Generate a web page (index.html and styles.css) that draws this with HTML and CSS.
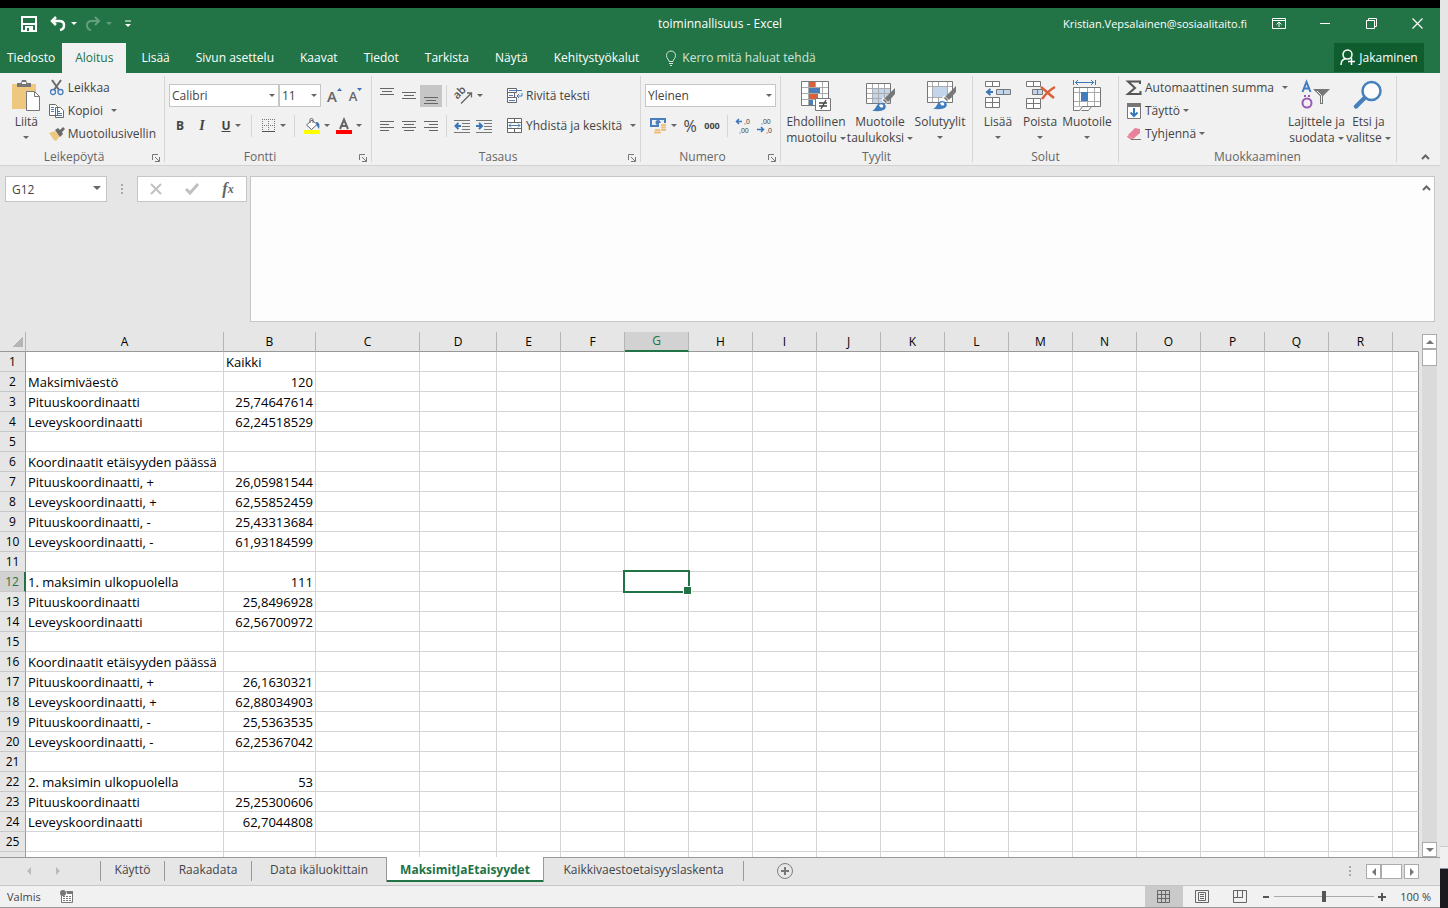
FILE: index.html
```html
<!DOCTYPE html>
<html lang="fi">
  <head>
    <meta charset="UTF-8">
    <title>toiminnallisuus - Excel</title>
    <link rel="stylesheet" href="styles.css">
  </head>

  <body>
    <div class="window">
      <header class="titlebar">
        <div class="quick">
          <button aria-label="Tallenna">
            <svg width="16" height="16" viewBox="0 0 16 16"><path d="M1 1h14v14H1z" fill="none" stroke="#fff" stroke-width="2"/><path d="M2 8h12" stroke="#fff" stroke-width="2"/><path d="M4 10h8v5H4z" fill="#fff"/><path d="M6 12h2v3H6z" fill="#227447"/></svg>
          </button>
          <button aria-label="Kumoa" class="undo">
            <svg width="16" height="16" viewBox="0 0 16 16"><path d="M6 1L2 5l4 4M2 5h7c7 0 6 8 1 9" fill="none" stroke="#fff" stroke-width="2.500"/></svg>
            <i class="arrow"></i>
          </button>
          <button aria-label="Tee uudelleen" class="redo">
            <svg width="16" height="16" viewBox="0 0 16 16"><path d="M10 1l4 4-4 4M14 5H7C0 5 1 13 6 14" fill="none" stroke="#fff" stroke-width="2"/></svg>
            <i class="arrow"></i>
          </button>
          <button aria-label="Mukauta" class="customize">
            <svg width="6" height="8" viewBox="0 0 6 8"><path d="M0 1h6" stroke="#fff"/><path d="M0 4h6L3 7z" fill="#fff"/></svg>
          </button>
        </div>
        <h1 class="title">toiminnallisuus - Excel</h1>
        <div class="account">
          <span class="user">Kristian.Vepsalainen@sosiaalitaito.fi</span>
          <button aria-label="Valintanauhan asetukset"><svg width="14" height="11" viewBox="0 0 14 11" fill="none" stroke="#fff"><path d="M.5.5h13v10H.5zM.5 2.500h13M7 9V4M4.500 6.500L7 4l2.500 2.500"/></svg></button>
          <button aria-label="Pienennä"><svg width="10" height="11" viewBox="0 0 10 11"><path d="M0 5.500h10" stroke="#fff"/></svg></button>
          <button aria-label="Palauta"><svg width="11" height="11" viewBox="0 0 11 11" fill="none" stroke="#fff"><path d="M.5 2.500h8v8h-8zM2.500 2.500v-2h8v8h-2"/></svg></button>
          <button aria-label="Sulje"><svg width="11" height="11" viewBox="0 0 11 11"><path d="M.5.5l10 10M10.500.5l-10 10" stroke="#fff" stroke-width="1.200"/></svg></button>
        </div>
      </header>

      <nav class="tabs">
        <a href="#" class="file">Tiedosto</a>
        <a href="#" class="active">Aloitus</a>
        <a href="#">Lisää</a>
        <a href="#">Sivun asettelu</a>
        <a href="#">Kaavat</a>
        <a href="#">Tiedot</a>
        <a href="#">Tarkista</a>
        <a href="#">Näytä</a>
        <a href="#">Kehitystyökalut</a>
        <a href="#" class="tell">
          <svg width="12" height="16" viewBox="0 0 12 16" fill="none" stroke="#d3e5da"><path d="M4 11.500c0-2-2.500-3-2.500-6a4.500 4.500 0 0 1 9 0c0 3-2.500 4-2.500 6zM4 13.500h4M5 15.500h2"/></svg>
          Kerro mitä haluat tehdä
        </a>
        <button class="share">
          <svg width="16" height="17" viewBox="0 0 16 17" fill="none" stroke="#fff" stroke-width="1.500"><circle cx="7.500" cy="5.500" r="4.500"/><path d="M1 16c0-4 2-6 5-6.500M11.500 9v7M8 12.500h7"/></svg>
          Jakaminen
        </button>
      </nav>

      <section class="ribbon">
        <div class="group clipboard launcher">
          <div class="body">
            <button class="big">
              <svg width="32" height="32" viewBox="0 0 32 32"><path d="M2 4h24v25H2z" fill="#edc87e"/><path d="M7 3h4l1-3h4l1 3h4v4H7z" fill="#777"/><path d="M12 2h4v2h-4z" fill="#f1f1f1"/><path d="M16.500 11.500h8l5 5v14h-13z" fill="#fff" stroke="#777"/><path d="M24.500 11.500v5h5" fill="none" stroke="#777"/></svg>
              <span>Liitä</span><i class="arrow"></i>
            </button>
            <div class="stack">
              <button class="small"><svg width="16" height="16" viewBox="0 0 16 16" fill="none"><path d="M3 0l7 10M12 0L5 10" stroke="#6a6a6a" stroke-width="2"/><circle cx="4" cy="12" r="2.500" stroke="#4a7ebb" stroke-width="1.300"/><circle cx="11.500" cy="12" r="2.500" stroke="#4a7ebb" stroke-width="1.300"/></svg>Leikkaa</button>
              <button class="small"><svg width="16" height="16" viewBox="0 0 16 16" fill="#fff" stroke="#6a6a6a"><path d="M.5 1.500h6l2 2v9h-8zM6.500 4.500h5l3 3v7h-8z"/><path d="M2 4.500h3M2 6.500h3M2 8.500h3M8 8.500h3M8 10.500h5M8 12.500h5" stroke="#4a7ebb"/></svg>Kopioi<i class="arrow far"></i></button>
              <button class="small"><svg width="16" height="16" viewBox="0 0 16 16"><path d="M0 7l6-2 5 5-4 5-2-1z" fill="#edc87e"/><path d="M6 4l3-2 2 2 3-3 2 2-3 3 1 2-3 3z" fill="#6a6a6a"/></svg>Muotoilusivellin</button>
            </div>
          </div>
          <div class="label">Leikepöytä</div>
          <button class="launch" aria-label="Leikepöytä"><svg width="8" height="8" viewBox="0 0 8 8" fill="none" stroke="#777"><path d="M.5 6V.5H6M3 3l4 4M7.500 3v4.500H3"/></svg></button>
        </div>

        <div class="group font launcher">
          <div class="rows">
            <div class="row">
              <label class="combo family"><select aria-label="Fontti"><option>Calibri</option></select></label>
              <label class="combo size"><select aria-label="Fonttikoko"><option>11</option></select></label>
              <button class="tool grow">A<svg width="5" height="3" viewBox="0 0 5 3"><path d="M0 3L2.500 0 5 3z" fill="#3a76b8"/></svg></button>
              <button class="tool shrink">A<svg width="5" height="3" viewBox="0 0 5 3"><path d="M0 0l2.500 3L5 0z" fill="#3a76b8"/></svg></button>
            </div>
            <div class="row">
              <button class="tool bold">B</button>
              <button class="tool italic">I</button>
              <button class="tool split underline"><span>U</span><i class="arrow"></i></button>
              <i class="sep"></i>
              <button class="tool split" aria-label="Reunat"><svg width="14" height="14" viewBox="0 0 14 14" stroke="#777" fill="none"><path d="M0 .5h13M0 6.500h13M.5 0v13M6.500 0v13M12.500 0v13" stroke-dasharray="1 1"/><path d="M0 12.500h13" stroke="#555"/></svg><i class="arrow"></i></button>
              <i class="sep"></i>
              <button class="tool split" aria-label="Täyttöväri"><svg width="16" height="16" viewBox="0 0 16 16"><path d="M2.500 7L8 2l5 4.500-5.500 5z" fill="#fff" stroke="#666"/><path d="M6 5V1.500C6 0 9 0 9 1.500V5" fill="none" stroke="#666"/><path d="M12 4c3 0 4 2 3 7l-2-3z" fill="#3a76b8"/><path d="M0 12h16v4H0z" fill="#ff0"/></svg><i class="arrow"></i></button>
              <button class="tool split" aria-label="Fontin väri"><svg width="16" height="16" viewBox="0 0 16 16"><path d="M4 11L8 1.500 12 11M5.500 8h5" fill="none" stroke="#666" stroke-width="2"/><path d="M0 12h16v4H0z" fill="#f00"/></svg><i class="arrow"></i></button>
            </div>
          </div>
          <div class="label">Fontti</div>
          <button class="launch" aria-label="Fontti"><svg width="8" height="8" viewBox="0 0 8 8" fill="none" stroke="#777"><path d="M.5 6V.5H6M3 3l4 4M7.500 3v4.500H3"/></svg></button>
        </div>

        <div class="group align launcher">
          <div class="body">
            <div class="rows">
              <div class="row">
                <button class="tool" aria-label="Tasaa ylös"><svg width="14" height="16" viewBox="0 0 14 16" stroke="#666"><path d="M0 .5h14M2 3.500h10M0 6.500h14"/></svg></button>
                <button class="tool" aria-label="Tasaa keskelle"><svg width="14" height="16" viewBox="0 0 14 16" stroke="#666"><path d="M0 4.500h14M2 7.500h10M0 10.500h14"/></svg></button>
                <button class="tool on" aria-label="Tasaa alas"><svg width="14" height="16" viewBox="0 0 14 16" stroke="#666"><path d="M0 9.500h14M2 12.500h10M0 15.500h14"/></svg></button>
                <i class="sep"></i>
                <button class="tool split" aria-label="Suunta"><svg width="17" height="16" viewBox="0 0 17 16"><text x="0" y="9" transform="rotate(-45 4 9)" class="ab">ab</text><path d="M5 15.500L15 5.500M11 5h4.500v4.500" fill="none" stroke="#666" stroke-width="1.300"/></svg><i class="arrow"></i></button>
              </div>
              <div class="row">
                <button class="tool" aria-label="Tasaa vasemmalle"><svg width="14" height="12" viewBox="0 0 14 12" stroke="#666"><path d="M0 1.500h14M0 4.500h9M0 7.500h14M0 10.500h9"/></svg></button>
                <button class="tool" aria-label="Keskitä"><svg width="14" height="12" viewBox="0 0 14 12" stroke="#666"><path d="M0 1.500h14M2 4.500h10M0 7.500h14M2 10.500h10"/></svg></button>
                <button class="tool" aria-label="Tasaa oikealle"><svg width="14" height="12" viewBox="0 0 14 12" stroke="#666"><path d="M0 1.500h14M5 4.500h9M0 7.500h14M5 10.500h9"/></svg></button>
                <i class="sep"></i>
                <button class="tool" aria-label="Pienennä sisennystä"><svg width="16" height="14" viewBox="0 0 16 14"><path d="M0 1.500h16M8 4.500h8M8 7.500h8M8 10.500h8M0 13.500h16" stroke="#777"/><path d="M7 7H2M4.500 4L1.500 7l3 3" fill="none" stroke="#3a76b8" stroke-width="2"/></svg></button>
                <button class="tool" aria-label="Suurenna sisennystä"><svg width="16" height="14" viewBox="0 0 16 14"><path d="M0 1.500h16M8 4.500h8M8 7.500h8M8 10.500h8M0 13.500h16" stroke="#777"/><path d="M0 7h5M3 4l3 3-3 3" fill="none" stroke="#3a76b8" stroke-width="2"/></svg></button>
              </div>
            </div>
            <i class="sep tall"></i>
            <div class="rows">
              <div class="row"><button class="small"><svg width="16" height="16" viewBox="0 0 16 16" fill="none" stroke="#666"><path d="M.5.5h9v4h-9zM.5 4.500h7v5h-7zM.5 9.500h9v5h-9z" fill="#fff"/><path d="M2 2.500h13M2 7.500h4M2 12.500h6" stroke="#4a7ebb"/><path d="M15 5v3h-5M12 6l-2 2 2 2" stroke="#4a7ebb"/></svg>Rivitä teksti</button></div>
              <div class="row"><button class="small merge"><svg width="16" height="16" viewBox="0 0 16 16" fill="none" stroke="#666"><path d="M.5.5h14v14H.5zM.5 4.500h14M.5 10.500h14M7.500 0v4M7.500 11v4" fill="#fff"/><path d="M2 7.500h11M4 5.500l-2 2 2 2M11 5.500l2 2-2 2" stroke="#4a7ebb"/></svg>Yhdistä ja keskitä<i class="arrow far"></i></button></div>
            </div>
          </div>
          <div class="label">Tasaus</div>
          <button class="launch" aria-label="Tasaus"><svg width="8" height="8" viewBox="0 0 8 8" fill="none" stroke="#777"><path d="M.5 6V.5H6M3 3l4 4M7.500 3v4.500H3"/></svg></button>
        </div>

        <div class="group number launcher">
          <div class="rows">
            <div class="row"><label class="combo format"><select aria-label="Lukumuoto"><option>Yleinen</option></select></label></div>
            <div class="row">
              <button class="tool split" aria-label="Valuutta"><svg width="17" height="16" viewBox="0 0 17 16"><path d="M0 0h16v9H0z" fill="#4a7ebb"/><path d="M2 2h12v5H2z" fill="#e8f0f8"/><circle cx="8" cy="4.500" r="2.500" fill="#4a7ebb"/><path d="M9 9V5h8v9h-5v2H4v-5h5z" fill="#f1f1f1"/><path d="M11 6h5v2h-5zM11 8.500h5v2h-5zM11 11h5v2h-5zM5 11h5v2H5zM4 13.500h7v2H4z" fill="#edc07e"/></svg><i class="arrow"></i></button>
              <button class="tool percent">%</button>
              <button class="tool thousands">000</button>
              <i class="sep"></i>
              <button class="tool" aria-label="Lisää desimaaleja"><svg width="16" height="16" viewBox="0 0 16 16"><text x="9" y="6" class="dec">,0</text><text x="4" y="15" class="dec">,00</text><path d="M7 3.500H2M4 1L1.500 3.500 4 6" fill="none" stroke="#3a76b8" stroke-width="1.500"/></svg></button>
              <button class="tool" aria-label="Vähennä desimaaleja"><svg width="16" height="16" viewBox="0 0 16 16"><text x="4" y="6" class="dec">,00</text><text x="9" y="15" class="dec">,0</text><path d="M0 11.500h6M4 9l2.500 2.500L4 14" fill="none" stroke="#3a76b8" stroke-width="1.500"/></svg></button>
            </div>
          </div>
          <div class="label">Numero</div>
          <button class="launch" aria-label="Numero"><svg width="8" height="8" viewBox="0 0 8 8" fill="none" stroke="#777"><path d="M.5 6V.5H6M3 3l4 4M7.500 3v4.500H3"/></svg></button>
        </div>

        <div class="group styles">
          <div class="body">
            <button class="big">
              <svg width="32" height="32" viewBox="0 0 32 32"><path d="M1.500 1.500h27v24h-27z" fill="#fff" stroke="#777"/><path d="M2 7.500h26M2 13.500h26M2 19.500h26M8.500 2v23M15.500 2v23M22.500 2v23" stroke="#aaa"/><path d="M9 2h6v5H9zM9 14h9v5H9z" fill="#d9603b"/><path d="M9 8h11v5H9zM9 20h4v5H9z" fill="#4a7ebb"/><path d="M15.500 18.500h15v12h-15z" fill="#fff" stroke="#777"/><path d="M19 23h8M19 26h8M26 20l-5 9" stroke="#444" stroke-width="1.300"/></svg>
              <span>Ehdollinen</span><span>muotoilu<i class="arrow"></i></span>
            </button>
            <button class="big">
              <svg width="32" height="32" viewBox="0 0 32 32"><path d="M2.500 3.500h24v20h-24z" fill="#fff" stroke="#777"/><path d="M9 9h17v14H9z" fill="#c3d5ea"/><path d="M3 8.500h23M3 13.500h23M3 18.500h23M8.500 4v19M14.500 4v19M20.500 4v19" stroke="#aaa"/><path d="M31 8v6l-7 8-4-3z" fill="#777"/><path d="M19 17l5 5-2 2-5-4z" fill="#f1f1f1"/><path d="M20 19l3 3-1 1-3-3z" fill="#666"/><path d="M8 31c4-1 4-8 9-8 4 0 6 3 4 6-3 3-9 2-13 2z" fill="#3f7dbd"/><path d="M15 25c3-2 5 0 4 2-1 1-3 1-4-2z" fill="#fff"/></svg>
              <span>Muotoile</span><span>taulukoksi<i class="arrow"></i></span>
            </button>
            <button class="big narrow">
              <svg width="32" height="32" viewBox="0 0 32 32"><path d="M3.500 1.500h25v21h-25z" fill="#fff" stroke="#777"/><path d="M4 6.500h24M4 17.500h24M8.500 2v20M23.500 2v20M14.500 2v4M14.500 18v4" stroke="#aaa"/><path d="M9 7h14v10H9z" fill="#c3d5ea"/><path d="M32 6v6l-7 8-4-3z" fill="#777"/><path d="M20 15l5 5-2 2-5-4z" fill="#f1f1f1"/><path d="M21 17l3 3-1 1-3-3z" fill="#666"/><path d="M9 29c4-1 4-8 9-8 4 0 6 3 4 6-3 3-9 2-13 2z" fill="#3f7dbd"/><path d="M16 23c3-2 5 0 4 2-1 1-3 1-4-2z" fill="#fff"/></svg>
              <span>Solutyylit</span><i class="arrow"></i>
            </button>
          </div>
          <div class="label">Tyylit</div>
        </div>

        <div class="group cells">
          <div class="body">
            <button class="big">
              <svg width="28" height="32" viewBox="0 0 28 32"><path d="M1.500 1.500h14v5h-14zM8.500 1.500v5M1.500 17.500h14v10h-14zM1.500 22.500h14M8.500 17.500v10" fill="#fff" stroke="#777"/><path d="M12.500 9.500h14v5h-14zM19.500 9.500v5" fill="#c3d5ea" stroke="#777"/><path d="M9 12H4M6.500 9L3 12l3.500 3" fill="none" stroke="#3a76b8" stroke-width="2"/></svg>
              <span>Lisää</span><i class="arrow"></i>
            </button>
            <button class="big">
              <svg width="30" height="32" viewBox="0 0 30 32"><path d="M1.500 1.500h14v5h-14zM8.500 1.500v5M1.500 18.500h14v10h-14zM1.500 23.500h14M8.500 18.500v10" fill="#fff" stroke="#777"/><path d="M7.500 9.500h10v5h-10zM12.500 9.500v5" fill="#c3d5ea" stroke="#777"/><path d="M16 7c5 4 9 8 13 11M30 7c-6 3-10 8-13 12" fill="none" stroke="#d9603b" stroke-width="2.500"/></svg>
              <span>Poista</span><i class="arrow"></i>
            </button>
            <button class="big">
              <svg width="32" height="32" viewBox="0 0 32 32"><path d="M2.500 0v5M24.500 0v5M4 2.500h19M7 0L4.500 2.500 7 5M20 0l2.500 2.500L20 5" fill="none" stroke="#3a76b8"/><path d="M2.500 7.500h27v19h-27z" fill="#fff" stroke="#777"/><path d="M3 12.500h26M3 21.500h26M8.500 8v18M16.500 8v18M23.500 8v18" stroke="#aaa"/><path d="M10 12h7v9h-7z" fill="#3f7dbd"/><path d="M2.500 26.500v4h6l3-4M10.500 30.500h7l3-4" fill="#fff" stroke="#777"/></svg>
              <span>Muotoile</span><i class="arrow"></i>
            </button>
          </div>
          <div class="label">Solut</div>
        </div>

        <div class="group edit">
          <div class="body">
            <div class="stack">
              <button class="small"><svg width="16" height="16" viewBox="0 0 16 16"><path d="M14 4V1.500H2L9 8l-7 6h12.500V11" fill="none" stroke="#555" stroke-width="2"/></svg>Automaattinen summa<i class="arrow far"></i></button>
              <button class="small"><svg width="16" height="16" viewBox="0 0 16 16"><path d="M1.500.5h13v15h-13z" fill="#fff" stroke="#777"/><path d="M1 0h14v4H1z" fill="#777"/><path d="M8 5v8M4.500 9.500L8 13l3.500-3.500" fill="none" stroke="#3a76b8" stroke-width="2"/></svg>Täyttö<i class="arrow near"></i></button>
              <button class="small"><svg width="16" height="16" viewBox="0 0 16 16"><path d="M9 2l5 1v4l-7 6-5-4z" fill="#e8829a"/><path d="M1.500 10L6 13.500" stroke="#e8829a" stroke-width="2"/><path d="M5 13.500h10" stroke="#777"/></svg>Tyhjennä<i class="arrow near"></i></button>
            </div>
            <button class="big sort">
              <svg width="32" height="32" viewBox="0 0 32 32"><path d="M2.500 12L6.500 2l4 10M4 8.500h5" fill="none" stroke="#3f7dbd" stroke-width="2"/><circle cx="7" cy="23" r="4.500" fill="none" stroke="#9b59b6" stroke-width="2"/><path d="M4 15h2v2H4zM8 15h2v2H8z" fill="#9b59b6"/><path d="M13 9h17l-7 7v8h-3v-8z" fill="#777"/><path d="M17 11l4.500 4.500V23" fill="none" stroke="#f1f1f1"/></svg>
              <span>Lajittele ja</span><span>suodata<i class="arrow"></i></span>
            </button>
            <button class="big find">
              <svg width="30" height="32" viewBox="0 0 30 32"><circle cx="18.500" cy="11" r="9" fill="#fcfcfc" stroke="#4680bd" stroke-width="2.500"/><path d="M11.500 18L3 26.500" stroke="#4680bd" stroke-width="4.500" stroke-linecap="round"/></svg>
              <span>Etsi ja</span><span>valitse<i class="arrow"></i></span>
            </button>
          </div>
          <div class="label">Muokkaaminen</div>
        </div>
        <button class="collapse" aria-label="Tiivistä valintanauha"><svg width="9" height="6" viewBox="0 0 9 6"><path d="M1 5l3.500-3.500L8 5" fill="none" stroke="#666" stroke-width="2"/></svg></button>
      </section>

      <section class="formula">
        <label class="namebox"><input type="text" value="G12" aria-label="Nimiruutu"></label>
        <i class="dots"></i>
        <div class="fx">
          <button aria-label="Peruuta"><svg width="12" height="12" viewBox="0 0 12 12"><path d="M1 1l10 10M11 1L1 11" stroke="#c0c0c0" stroke-width="2"/></svg></button>
          <button aria-label="Hyväksy"><svg width="14" height="12" viewBox="0 0 14 12"><path d="M1 6l4 4 8-9" fill="none" stroke="#c0c0c0" stroke-width="3"/></svg></button>
          <button class="insert">f<sub>x</sub></button>
        </div>
        <div class="input">
          <textarea aria-label="Kaavarivi"></textarea>
          <svg width="9" height="6" viewBox="0 0 9 6"><path d="M1 5l3.500-3.500L8 5" fill="none" stroke="#666" stroke-width="2"/></svg>
        </div>
      </section>

      <main class="grid">
        <div class="view">
          <table id="sheet"></table>
        </div>
        <div class="vscroll">
          <button aria-label="Ylös"><i class="tri up"></i></button>
          <div class="thumb"></div>
          <button class="end" aria-label="Alas"><i class="tri down"></i></button>
        </div>
      </main>

      <nav class="sheets">
        <div class="move"><i class="tri left"></i><i class="tri right"></i></div>
        <a href="#">Käyttö</a>
        <a href="#" class="w2">Raakadata</a>
        <a href="#" class="w3">Data ikäluokittain</a>
        <a href="#" class="active">MaksimitJaEtaisyydet</a>
        <a href="#" class="w5">Kaikkivaestoetaisyyslaskenta</a>
        <button class="add" aria-label="Uusi taulukko"><svg width="16" height="16" viewBox="0 0 16 16"><circle cx="8" cy="8" r="7.500" fill="none" stroke="#808080"/><path d="M4 8h8M8 4v8" stroke="#777" stroke-width="2"/></svg></button>
        <i class="dots"></i>
        <div class="hscroll">
          <button aria-label="Vasemmalle"><i class="tri left"></i></button>
          <div class="thumb"></div>
          <button class="end" aria-label="Oikealle"><i class="tri right"></i></button>
        </div>
      </nav>

      <footer class="status">
        <span class="ready">Valmis</span>
        <svg class="macro" width="14" height="14" viewBox="0 0 14 14"><path d="M1.500 4v8.500h11V2H6" fill="#fff" stroke="#777"/><path d="M7 1h6v3H7z" fill="#777"/><circle cx="3" cy="3" r="3" fill="#777"/><path d="M3 6.500h9M3 8.500h9M3 10.500h9" stroke="#777" stroke-dasharray="2 1"/></svg>
        <div class="views">
          <button class="on" aria-label="Normaali"><svg width="14" height="14" viewBox="0 0 14 14" fill="none" stroke="#666"><path d="M.5.5h12v12H.5zM0 4.500h13M0 8.500h13M4.500 0v13M8.500 0v13"/></svg></button>
          <button aria-label="Sivun asettelu"><svg width="14" height="14" viewBox="0 0 14 14" fill="none" stroke="#666"><path d="M.5.5h13v12H.5zM3.500 2.500h7v8h-7zM5 4.500h4M5 6.500h4M5 8.500h4"/></svg></button>
          <button aria-label="Sivunvaihdot"><svg width="14" height="14" viewBox="0 0 14 14" fill="none" stroke="#666"><path d="M.5.5h13v12H.5zM4.500 1v6M9.500 1v6M1 7.500h9"/></svg></button>
        </div>
        <button class="zoom" aria-label="Loitonna"><svg width="8" height="8" viewBox="0 0 8 8"><path d="M1 4h6" stroke="#555" stroke-width="2"/></svg></button>
        <input type="range" min="10" max="190" value="100" aria-label="Zoomaus">
        <button class="zoom" aria-label="Lähennä"><svg width="8" height="8" viewBox="0 0 8 8"><path d="M0 4h8M4 0v8" stroke="#555" stroke-width="2"/></svg></button>
        <span class="level">100 %</span>
      </footer>
    </div>
    <div class="edge"></div>

    <script src="script.js"></script>
  </body>
</html>
```
FILE: styles.css
```css
* {
  box-sizing: border-box;
}
html, body {
  margin: 0;
  height: 100%;
}
body {
  display: flex;
  overflow: hidden;
  font-family: 'Open Sans', 'Noto Sans', sans-serif;
  font-size: 12px;
  color: #444;
  background: #e6e6e6;
}
button, input, select, textarea {
  font: inherit;
  color: inherit;
  margin: 0;
  padding: 0;
  border: 0;
  background: none;
  outline: none;
}
a {
  color: inherit;
  text-decoration: none;
}
svg {
  display: block;
  flex: none;
  overflow: visible;
}
button {
  display: flex;
  align-items: center;
  justify-content: center;
  white-space: nowrap;
}

.window {
  flex: 1;
  min-width: 0;
  height: 100%;
  display: flex;
  flex-direction: column;
  border-top: 8px solid #000;
}
.edge {
  width: 8px;
  background: linear-gradient(to top, #1c1a1e 39px, #8a93a5 39px, #8a93a5 40px, #f0f0f0 40px, #f0f0f0 61px, #ccc 61px, #ccc 62px, #e6e6e6 62px);
}

.arrow {
  display: inline-block;
  border: 3px solid transparent;
  border-top-color: #666;
  border-bottom: 0;
}

/* title bar */
.titlebar {
  display: flex;
  align-items: center;
  height: 35px;
  padding-bottom: 4px;
  background: #227447;
  color: #fff;
}
.quick {
  display: flex;
  flex: 1;
  gap: 13px;
}
.quick button:first-child {
  margin-left: 21px;
}
.quick .arrow {
  border-top-color: #fff;
  margin-left: 5px;
}
.quick .redo {
  opacity: 0.3;
  margin-left: -5px;
}
.title {
  margin: 0;
  font-size: 12px;
  font-weight: normal;
}
.account {
  display: flex;
  align-items: center;
  justify-content: flex-end;
  flex: 1;
}
.account button {
  width: 46px;
  height: 30px;
}
.user {
  margin-right: 9px;
  font-size: 11px;
}

/* tabs */
.tabs {
  display: flex;
  align-items: stretch;
  height: 30px;
  background: #227447;
  color: #fff;
}
.tabs a {
  padding: 0 13px;
  line-height: 30px;
  white-space: nowrap;
}
.tabs .file {
  padding: 0 7px;
}
.tabs .active {
  margin-right: 2px;
  background: #f1f1f1;
  color: #217346;
}
.tabs .tell {
  display: flex;
  align-items: center;
  gap: 5px;
  color: #d3e5da;
}
.share {
  gap: 3px;
  width: 90px;
  height: 29px;
  margin-left: auto;
  margin-right: 16px;
  background: #0f5c2f;
  color: #fff;
}

/* ribbon */
.ribbon {
  display: flex;
  height: 93px;
  padding-top: 3px;
  background: #f1f1f1;
  border-bottom: 1px solid #d2d2d2;
}
.group {
  position: relative;
  display: flex;
  flex-direction: column;
  justify-content: space-between;
  margin-bottom: 3px;
  padding: 0 4px;
  border-right: 1px solid #d5d5d5;
}
.body {
  display: flex;
}
.label {
  height: 10px;
  line-height: 10px;
  text-align: center;
  color: #666;
}
.launcher .label {
  padding-right: 16px;
}
.launch {
  position: absolute;
  right: 4px;
  bottom: 0;
}
.clipboard { width: 165px; }
.font { width: 207px; }
.align { width: 269px; }
.number { width: 140px; }
.styles { width: 192px; padding: 0 3px; }
.cells { width: 146px; }
.edit { width: 278px; }

.big {
  flex-direction: column;
  justify-content: flex-start;
  width: 64px;
  height: 70px;
  padding-top: 4px;
  line-height: 16px;
}
.big svg {
  margin-bottom: 2px;
}
.big > .arrow {
  margin-top: 6px;
}
.big span .arrow {
  margin: 0 0 2px 3px;
}
.big.narrow { width: 56px; }
.clipboard .big { width: 45px; }
.cells .big { width: 42px; }
.cells .big:last-child { width: 52px; }
.big.sort { width: 57px; }
.big.find { width: 48px; }

.small {
  height: 23px;
  padding: 0 4px;
  gap: 3px;
}
.stack .small {
  padding-left: 0;
}
.far {
  margin-left: 5px;
}
.stack {
  display: flex;
  flex-direction: column;
  align-items: flex-start;
}
.edit .stack {
  width: 165px;
  padding-left: 3px;
}
.rows {
  padding-top: 8px;
}
.row {
  display: flex;
  align-items: center;
  height: 23px;
  margin-bottom: 7px;
}
.combo {
  position: relative;
  height: 23px;
}
.combo select {
  appearance: none;
  width: 100%;
  height: 100%;
  padding-left: 2px;
  border: 1px solid #c6c6c6;
  background: #fff;
}
.combo::after, .namebox::after {
  content: '';
  position: absolute;
  right: 4px;
  top: 10px;
  border: 3px solid transparent;
  border-top-color: #666;
  border-bottom: 0;
}
.family { width: 111px; }
.size { width: 43px; }
.format { width: 131px; }

.tool {
  width: 22px;
  height: 22px;
}
.tool.on {
  background: #c6c6c6;
}
.split {
  width: 32px;
}
.split svg, .split span {
  margin: 0 4px;
}
.grow, .shrink {
  align-items: flex-start;
  width: 23px;
  font-size: 15px;
  font-weight: 600;
  line-height: 22px;
  color: #666;
}
.grow {
  padding-left: 3px;
}
.shrink {
  font-size: 13px;
}
.grow svg, .shrink svg {
  margin-top: 3px;
}
.bold, .underline {
  font-weight: bold;
}
.italic {
  font: italic bold 14px 'Liberation Serif', serif;
}
.underline span {
  text-decoration: underline;
}
.sep {
  width: 1px;
  height: 22px;
  margin: 0 4px;
  background: #d5d5d5;
}
.font .sep {
  margin: 0 4px 0 6px;
}
.sep.tall {
  height: 54px;
  margin-top: 8px;
}
.tool.percent {
  margin-left: 2px;
  font-size: 16px;
}
.thousands {
  font-size: 9px;
  font-weight: bold;
}
.ab {
  font-size: 11px;
  font-weight: 600;
  fill: #555;
}
.dec {
  font: 7px 'Liberation Sans', sans-serif;
  fill: #444;
}
.collapse {
  margin: auto 10px 5px auto;
}

/* formula bar */
.formula {
  display: flex;
  height: 166px;
  padding: 10px 5px;
  background: #e6e6e6;
}
.namebox {
  position: relative;
  width: 102px;
  height: 26px;
}
.namebox input {
  width: 100%;
  height: 100%;
  padding-left: 6px;
  border: 1px solid #c6c6c6;
  background: #fff;
}
.namebox::after {
  right: 6px;
  border-width: 4px 4px 0;
}
.dots {
  width: 2px;
  height: 10px;
  margin: 8px 14px;
  background: repeating-linear-gradient(#aaa 0 2px, transparent 2px 4px);
}
.fx {
  display: flex;
  width: 110px;
  height: 26px;
  margin-right: 3px;
  border: 1px solid #c6c6c6;
  background: #fff;
}
.fx button {
  flex: 1;
}
.fx .insert {
  font: italic bold 16px 'Liberation Serif', serif;
  color: #666;
}
.insert sub {
  font-size: 12px;
}
.input {
  position: relative;
  flex: 1;
}
.input textarea {
  display: block;
  width: 100%;
  height: 100%;
  resize: none;
  border: 1px solid #c6c6c6;
  background: #fdfdfd;
}
.input svg {
  position: absolute;
  right: 4px;
  top: 9px;
}

/* grid */
.grid {
  display: flex;
  flex: 1;
  min-height: 0;
  background: #e6e6e6;
}
.view {
  flex: 1;
  overflow: hidden;
}
#sheet {
  width: 100%;
  table-layout: fixed;
  border-collapse: separate;
  border-spacing: 0;
  font-size: 13px;
  line-height: 18px;
  color: #000;
}
#sheet th, #sheet td {
  height: 20px;
  padding: 1px 2px 0;
  border-right: 1px solid #d4d4d4;
  border-bottom: 1px solid #d4d4d4;
  white-space: nowrap;
}
#sheet th {
  font-size: 12px;
  font-weight: normal;
  background: #e6e6e6;
}
#sheet td {
  background: #fff;
}
#sheet thead th {
  padding-top: 0;
  border-right-color: #b5b5b5;
  border-bottom-color: #999;
}
#sheet thead th:last-child {
  border-right-color: #e6e6e6;
}
#sheet tbody th {
  border-right-color: #999;
  border-bottom-color: #c8c8c8;
}
#sheet td:last-child {
  border-right-color: #999;
}
#sheet th.current {
  background: #d2d2d2;
  color: #217346;
}
#sheet thead th.current {
  border-bottom: 2px solid #217346;
}
#sheet tbody th.current {
  border-right: 2px solid #217346;
}
#sheet .num {
  text-align: right;
}
#sheet .cursor {
  position: relative;
}
.cursor::before {
  content: '';
  position: absolute;
  inset: -2px;
  border: 2px solid #217346;
}
.cursor::after {
  content: '';
  position: absolute;
  right: -4px;
  bottom: -4px;
  width: 7px;
  height: 7px;
  border: 1px solid #fff;
  background: #217346;
}
.corner::after {
  content: '';
  display: block;
  margin-left: auto;
  width: 11px;
  height: 11px;
  background: linear-gradient(135deg, transparent 50%, #b5b5b5 50%);
}

.tri {
  border: 4px solid transparent;
}
.up { border-bottom-color: #777; border-top: 0; }
.down { border-top-color: #777; border-bottom: 0; }
.left { border-right-color: #777; border-left: 0; }
.right { border-left-color: #777; border-right: 0; }

.vscroll {
  display: flex;
  flex-direction: column;
  width: 15px;
  margin: 2px 3px 0;
  background: #dadada;
}
.vscroll button, .hscroll button {
  width: 15px;
  height: 15px;
  border: 1px solid #ababab;
  background: #fff;
}
.thumb {
  height: 17px;
  border: 1px solid #ababab;
  background: #fff;
}
.vscroll .end {
  margin-top: auto;
}

/* sheet tabs */
.sheets {
  display: flex;
  height: 29px;
  border-top: 1px solid #999;
  border-bottom: 1px solid #c6c6c6;
  background: #e6e6e6;
}
.sheets a {
  width: 64px;
  height: 20px;
  margin-top: 3px;
  line-height: 18px;
  text-align: center;
  white-space: nowrap;
  border-right: 1px solid #999;
}
.sheets .w2 { width: 87px; }
.sheets .w3 { width: 134px; border-right: 0; }
.sheets .w5 { width: 200px; }
.sheets .active {
  width: 158px;
  height: 25px;
  margin-top: -1px;
  padding-top: 4px;
  border: solid #999;
  border-width: 0 1px;
  box-shadow: inset 0 -2px #217346;
  background: #fff;
  color: #217346;
  font-weight: bold;
}
.move {
  display: flex;
  align-items: center;
  gap: 25px;
  width: 101px;
  height: 20px;
  margin-top: 3px;
  padding-left: 27px;
  border-right: 1px solid #999;
}
.move .tri {
  opacity: 0.4;
}
.add {
  height: 26px;
  margin: 0 auto 0 33px;
}
.sheets .dots {
  margin: 8px 15px;
}
.hscroll {
  display: flex;
  width: 53px;
  height: 15px;
  margin: 6px 21px 0 0;
  background: #dadada;
}
.hscroll .thumb {
  width: 21px;
  height: 15px;
}
.hscroll .end {
  margin-left: auto;
}

/* status bar */
.status {
  display: flex;
  align-items: center;
  height: 22px;
  padding-right: 9px;
  background: #f1f1f1;
  border-bottom: 1px solid #999;
  font-size: 11px;
  line-height: 14px;
}
.ready {
  width: 60px;
  padding-left: 7px;
}
.views {
  display: flex;
  margin-left: auto;
  margin-right: 1px;
}
.views button {
  width: 38px;
  height: 21px;
}
.views .on {
  background: #cacaca;
}
.zoom {
  width: 12px;
  height: 20px;
}
input[type=range] {
  appearance: none;
  width: 100px;
  height: 12px;
  margin: 0 2px;
  background: linear-gradient(#aaa, #aaa) center / 100% 1px no-repeat;
}
input[type=range]::-webkit-slider-thumb {
  appearance: none;
  width: 4px;
  height: 11px;
  background: #555;
}
.level {
  width: 43px;
  text-align: right;
}
```
FILE: script.js
```js
const columns = 'ABCDEFGHIJKLMNOPQR'.split('').concat('');
const widths = [198, 92, 104, 77];
const rows = [
  ['', 'Kaikki'],
  ['Maksimiväestö', '120'],
  ['Pituuskoordinaatti', '25,74647614'],
  ['Leveyskoordinaatti', '62,24518529'],
  [],
  ['Koordinaatit etäisyyden päässä'],
  ['Pituuskoordinaatti, +', '26,05981544'],
  ['Leveyskoordinaatti, +', '62,55852459'],
  ['Pituuskoordinaatti, -', '25,43313684'],
  ['Leveyskoordinaatti, -', '61,93184599'],
  [],
  ['1. maksimin ulkopuolella', '111'],
  ['Pituuskoordinaatti', '25,8496928'],
  ['Leveyskoordinaatti', '62,56700972'],
  [],
  ['Koordinaatit etäisyyden päässä'],
  ['Pituuskoordinaatti, +', '26,1630321'],
  ['Leveyskoordinaatti, +', '62,88034903'],
  ['Pituuskoordinaatti, -', '25,5363535'],
  ['Leveyskoordinaatti, -', '62,25367042'],
  [],
  ['2. maksimin ulkopuolella', '53'],
  ['Pituuskoordinaatti', '25,25300606'],
  ['Leveyskoordinaatti', '62,7044808'],
  [],
  []
];
const current = { column: 'G', row: 12 };

// the last column takes what is left of the window
let html = '<colgroup><col style="width: 26px">';
columns.forEach((c, i) => {
  html += c ? '<col style="width: ' + (widths[i] || 64) + 'px">' : '<col>';
});
html += '</colgroup><thead><tr><th class="corner"></th>';
columns.forEach(c => {
  html += '<th' + (c === current.column ? ' class="current"' : '') + '>' + c + '</th>';
});
html += '</tr></thead><tbody>';

rows.forEach((row, i) => {
  const number = i + 1;
  html += '<tr><th' + (number === current.row ? ' class="current"' : '') + '>' + (number < 26 ? number : '') + '</th>';
  columns.forEach((c, j) => {
    const value = row[j] || '';
    let name = /^\d+(,\d+)?$/.test(value) ? 'num' : '';
    if (c === current.column && number === current.row) {
      name = 'cursor';
    }
    html += '<td' + (name ? ' class="' + name + '"' : '') + '>' + value + '</td>';
  });
  html += '</tr>';
});

document.getElementById('sheet').innerHTML = html + '</tbody>';
```
